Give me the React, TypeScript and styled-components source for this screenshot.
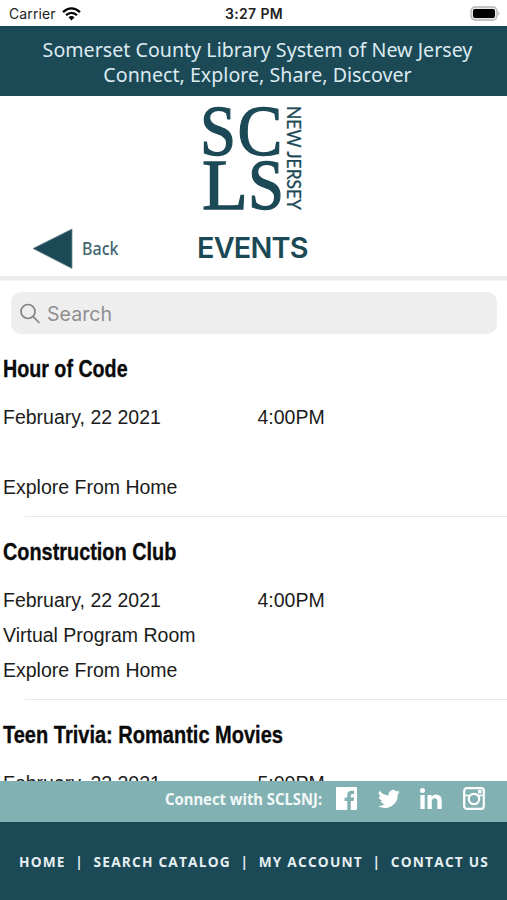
import React from "react";
import styled, { createGlobalStyle } from "styled-components";

const teal = "#1c4956";
const mist = "#82b1b3";

const GlobalStyle = createGlobalStyle`
  * { box-sizing: border-box; }
  body { margin: 0; background: #fff; }
`;

const Screen = styled.div`
  width: 507px;
  height: 900px;
  display: flex;
  flex-direction: column;
  overflow: hidden;
  background: #fff;
  font-family: "Liberation Sans", Arial, sans-serif;
`;

const StatusBar = styled.div`
  flex: none;
  height: 26px;
  display: grid;
  grid-template-columns: 1fr auto 1fr;
  align-items: center;
  padding: 1px 6px 0 9px;
  font-family: Inter, sans-serif;
  font-size: 14px;
  color: #222;
`;

const Carrier = styled.div`
  display: flex;
  align-items: center;
  gap: 6px;
  letter-spacing: 0.1px;
`;

const Clock = styled.div`
  margin-left: -2px;
  font-weight: 600;
  letter-spacing: 0.35px;
`;

const Battery = styled.svg`
  justify-self: end;
`;

const Banner = styled.header`
  flex: none;
  height: 70px;
  padding-top: 12px;
  background: ${teal};
  color: #dcebf1;
  text-align: center;
  font-family: "Noto Sans", sans-serif;
  font-size: 19.6px;
  line-height: 24.5px;
  letter-spacing: 0.03px;
  white-space: nowrap;
`;

const BannerLine = styled.div`
  padding-left: 8px;
`;

const Masthead = styled.div`
  flex: none;
  height: 180px;
  display: flex;
  flex-direction: column;
`;

const Logo = styled.svg`
  display: block;
  margin: 6px 0 0 198px;
  overflow: visible;
`;

const TitleRow = styled.div`
  display: grid;
  grid-template-columns: 197px 1fr;
  height: 50px;
  margin-top: 7px;
  align-items: center;
`;

const Back = styled.div`
  display: flex;
  align-items: center;
  gap: 9px;
  padding: 2px 0 0 32px;
  font-family: "Noto Sans", sans-serif;
  font-size: 18px;
  font-weight: 500;
  color: #42656f;
`;

const BackText = styled.span`
  margin-top: -2px;
  transform: scaleX(0.89);
  transform-origin: left;
`;

const Title = styled.h1`
  margin: 0;
  font-family: Inter, sans-serif;
  font-size: 28.8px;
  line-height: 34px;
  font-weight: 600;
  letter-spacing: -0.8px;
  color: ${teal};
`;

const Rule = styled.div`
  flex: none;
  height: 5px;
  background: linear-gradient(#ececec, #ececec 60%, #f8f8f8);
`;

const Search = styled.div`
  flex: none;
  height: 42px;
  margin: 11px 10px 0 11px;
  padding: 2px 0 0 8px;
  display: flex;
  align-items: center;
  gap: 6px;
  border-radius: 10px;
  background: #eee;
  color: #8e8e90;
  font-family: Inter, sans-serif;
  font-size: 19.6px;
`;

const List = styled.main`
  flex: 1;
  min-height: 0;
  overflow: hidden;
`;

const EventItem = styled.article`
  height: 183.2px;
  display: grid;
  grid-template-columns: 254.5px 1fr;
  grid-template-rows: 65px 36px 34px 36px 1fr;
  align-items: center;
  padding-left: 3px;
  font-size: 19.5px;
  color: #1b1b1b;
`;

const Name = styled.h2<{ $squeeze: number }>`
  grid-column: 1 / -1;
  justify-self: start;
  margin: 4px 0 0;
  font-size: 24.5px;
  line-height: 28px;
  font-weight: 700;
  color: #0a0a0a;
  -webkit-text-stroke: 0.35px #0a0a0a;
  white-space: nowrap;
  transform: scaleX(${(p) => p.$squeeze});
  transform-origin: left;
`;

const Wide = styled.div`
  grid-column: 1 / -1;
`;

const Divider = styled.div`
  grid-column: 1 / -1;
  align-self: end;
  height: 1px;
  margin-left: 22px;
  background: #e8e8e9;
`;

const Social = styled.div`
  flex: none;
  height: 41px;
  display: flex;
  align-items: center;
  padding: 0 21px 6px 165px;
  background: ${mist};
  color: #fff;
`;

const SocialLabel = styled.span`
  width: 171px;
  font-family: "Noto Sans", sans-serif;
  font-size: 16px;
  font-weight: 700;
  white-space: nowrap;
  transform: scaleX(0.926);
  transform-origin: left;
  color: #f2f9f8;
`;

const Icons = styled.div`
  display: flex;
  align-items: center;
  gap: 20.5px;
`;

const Nav = styled.nav`
  flex: none;
  height: 78px;
  display: flex;
  align-items: center;
  justify-content: space-between;
  padding: 1px 18px 0 19px;
  background: ${teal};
  color: #e6eff2;
  font-family: "Open Sans", sans-serif;
  font-size: 13.7px;
  font-weight: 700;
  letter-spacing: 1.2px;
  white-space: nowrap;
`;

const events = [
  { name: "Hour of Code", squeeze: 0.803, time: "4:00PM", room: "", place: "Explore From Home" },
  { name: "Construction Club", squeeze: 0.811, time: "4:00PM", room: "Virtual Program Room", place: "Explore From Home" },
  { name: "Teen Trivia: Romantic Movies", squeeze: 0.817, time: "5:00PM", room: "", place: "" },
];

export default function App() {
  return (
    <>
      <GlobalStyle />
      <Screen>
        <StatusBar>
          <Carrier>
            Carrier
            <svg width="19" height="14" viewBox="0 0 19 14" fill="none" stroke="#000" strokeWidth="2.3">
              <path d="M1 5.2Q9.500-2.400 18 5.200" />
              <path d="M4 8.200Q9.500 3.500 15 8.200" />
              <path d="M6.500 10.300Q9.500 7.900 12.500 10.300L9.500 13.400Z" fill="#000" stroke="none" />
            </svg>
          </Carrier>
          <Clock>3:27 PM</Clock>
          <Battery width="31" height="15" viewBox="0 0 31 15">
            <rect x="1" y="1" width="26" height="13" rx="4" fill="#e8e8e8" stroke="#b4b4b4" strokeWidth="1.300" />
            <rect x="3" y="3" width="22" height="9" rx="2" fill="#000" />
            <path d="M28.300 5Q30.500 7.500 28.300 10Z" fill="#a8a8a8" />
          </Battery>
        </StatusBar>
        <Banner>
          <BannerLine>Somerset County Library System of New Jersey</BannerLine>
          <BannerLine>Connect, Explore, Share, Discover</BannerLine>
        </Banner>
        <Masthead>
          <Logo width="110" height="114" viewBox="0 0 110 114" fill={teal} fontFamily="Liberation Serif, serif">
            <g fontSize="72" stroke={teal} strokeWidth="1.300">
              <text x="2" y="53" textLength="36" lengthAdjust="spacingAndGlyphs">S</text>
              <text x="39.500" y="53" textLength="45" lengthAdjust="spacingAndGlyphs">C</text>
              <text x="4" y="106.500" textLength="46" lengthAdjust="spacingAndGlyphs">L</text>
              <text x="50" y="106.500" textLength="36" lengthAdjust="spacingAndGlyphs">S</text>
            </g>
            <text transform="translate(89 4) rotate(90)" fontFamily="Lato, sans-serif" fontSize="18.500" stroke={teal} strokeWidth="0.250" textLength="104" lengthAdjust="spacingAndGlyphs">
              NEW JERSEY
            </text>
          </Logo>
          <TitleRow>
            <Back>
              <svg width="41" height="42" viewBox="0 0 41 42">
                <path d="M1 20.500L40 1V40.500Z" fill={teal} stroke="#6d8a93" strokeWidth="0.800" />
              </svg>
              <BackText>Back</BackText>
            </Back>
            <Title>EVENTS</Title>
          </TitleRow>
        </Masthead>
        <Rule />
        <Search>
          <svg width="22" height="22" viewBox="0 0 22 22" fill="none" stroke="#858587" strokeWidth="1.700" strokeLinecap="round">
            <circle cx="9" cy="8.500" r="7" />
            <path d="M14.200 13.700L20 19.500" />
          </svg>
          Search
        </Search>
        <List>
          {events.map((e) => (
            <EventItem key={e.name}>
              <Name $squeeze={e.squeeze}>{e.name}</Name>
              <div>February, 22 2021</div>
              <div>{e.time}</div>
              <Wide>{e.room}</Wide>
              <Wide>{e.place}</Wide>
              <Divider />
            </EventItem>
          ))}
        </List>
        <Social>
          <SocialLabel>Connect with SCLSNJ:</SocialLabel>
          <Icons>
            <svg width="21" height="23" viewBox="0 0 22 23" preserveAspectRatio="none" fill="#fff">
              <path d="M1 0H21Q22 0 22 1V22Q22 23 21 23H15.500V14H18.500L19 10.500H15.500V8.500Q15.500 7 17 7H19V3.800H16Q11.800 3.800 11.800 8V10.500H9V14H11.800V23H1Q0 23 0 22V1Q0 0 1 0Z" />
            </svg>
            <svg width="22" height="20" viewBox="0 0 24 20" fill="#fff">
              <path d="M24 2.400a9.800 9.800 0 0 1-2.800.8A4.900 4.900 0 0 0 23.300.500a9.900 9.900 0 0 1-3.100 1.200 4.900 4.900 0 0 0-8.400 4.500A14 14 0 0 1 1.700 1a4.900 4.900 0 0 0 1.500 6.600A4.900 4.900 0 0 1 1 7v.1a4.900 4.900 0 0 0 3.900 4.800 4.900 4.900 0 0 1-2.200.1 4.900 4.900 0 0 0 4.600 3.400A9.900 9.900 0 0 1 0 17.500 14 14 0 0 0 21.500 5z" />
            </svg>
            <svg width="22" height="21" viewBox="0 0 22 21" fill="#fff">
              <circle cx="2.500" cy="2.500" r="2.500" />
              <path d="M.4 7H4.700V21H.4ZM7.500 7H11.600V8.900Q13 6.600 16 6.600Q21.700 6.600 21.700 13V21H17.400V13.800Q17.400 10.300 14.700 10.300Q11.800 10.300 11.800 13.800V21H7.500Z" />
            </svg>
            <svg width="22" height="23" viewBox="0 0 22 23" fill="none" stroke="#fff">
              <rect x="1.200" y="1.200" width="19.600" height="20.600" rx="2.500" strokeWidth="2.200" />
              <path d="M1 8.500H6M16 8.500H21" strokeWidth="1.500" />
              <circle cx="11" cy="12" r="5.200" strokeWidth="2.200" />
              <rect x="15" y="3" width="3.500" height="3.500" fill="#fff" stroke="none" />
            </svg>
          </Icons>
        </Social>
        <Nav>
          <span>HOME</span>
          <span>|</span>
          <span>SEARCH CATALOG</span>
          <span>|</span>
          <span>MY ACCOUNT</span>
          <span>|</span>
          <span>CONTACT US</span>
        </Nav>
      </Screen>
    </>
  );
}
